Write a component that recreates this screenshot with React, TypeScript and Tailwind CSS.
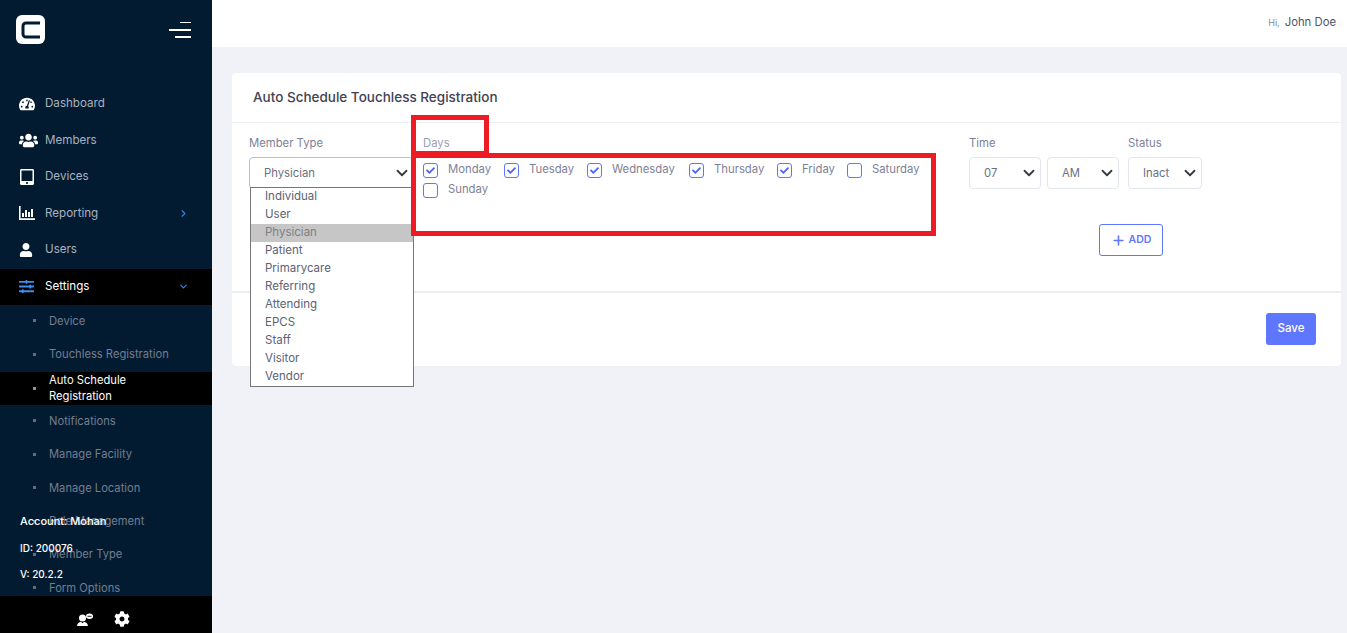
import { ChevronDown, ChevronRight, Plus } from 'lucide-react';
import { FaCheck, FaCog, FaSlidersH, FaTabletAlt, FaTachometerAlt, FaUser, FaUsers } from 'react-icons/fa';

const subItems = [
  'Device',
  'Touchless Registration',
  'Auto Schedule Registration',
  'Notifications',
  'Manage Facility',
  'Manage Location',
  'Role Management',
  'Member Type',
  'Form Options',
];

const memberTypes = ['Individual', 'User', 'Physician', 'Patient', 'Primarycare', 'Referring', 'Attending', 'EPCS', 'Staff', 'Visitor', 'Vendor'];

const days = [
  { name: 'Monday', on: true, cls: 'w-[81px]' },
  { name: 'Tuesday', on: true, cls: 'w-[83px]' },
  { name: 'Wednesday', on: true, cls: 'w-[102px]' },
  { name: 'Thursday', on: true, cls: 'w-[88px]' },
  { name: 'Friday', on: true, cls: 'w-[70px]' },
  { name: 'Saturday', on: false, cls: 'w-[82px]' },
  { name: 'Sunday', on: false, cls: 'w-[81px]' },
];

function Logo() {
  return (
    <svg width="29" height="29" viewBox="0 0 29 29">
      <rect width="29" height="29" rx="6" fill="#fff" />
      <path d="M24 8H10a3 3 0 0 0-3 3v8a3 3 0 0 0 3 3h14" fill="none" stroke="#031b30" strokeWidth="3" />
    </svg>
  );
}

function ReportIcon() {
  return (
    <svg width="16" height="14" viewBox="0 0 16 14" fill="#fff">
      <path d="M0 0h1.600v12.200H16V14H0z" />
      <path d="M3 7h2v4H3zM6 4h2v7H6zM9 6h2v5H9zM12 3h2v8h-2z" />
    </svg>
  );
}

function SupportIcon() {
  return (
    <svg width="16" height="13" viewBox="0 0 16 13" fill="#fff">
      <circle cx="5.500" cy="5" r="3.500" />
      <path d="M0 13c.2-2.500 2-4 4-4.200l1.500 1.500L7 8.800c2 .2 3.800 1.700 4 4.200z" />
      <ellipse cx="12.500" cy="3.200" rx="3.500" ry="2.700" />
      <path d="M10.500 2.800h4v.9h-4z" fill="#000" />
    </svg>
  );
}

function SelectBox({ value, cls }: { value: string; cls: string }) {
  return (
    <div className={`h-[32px] rounded-[4px] border flex items-center justify-between text-[11.300px] text-[#6b7080] ${cls}`}>
      <span>{value}</span>
      <svg width="16" height="12" viewBox="0 0 16 16" fill="none" stroke="#343a40" strokeWidth="2.400" strokeLinecap="round" strokeLinejoin="round">
        <path d="m2 5 6 6 6-6" />
      </svg>
    </div>
  );
}

function NavItem({ icon, label, right, active }: { icon: React.ReactNode; label: string; right?: React.ReactNode; active?: boolean }) {
  return (
    <div className={`h-[36.500px] shrink-0 pl-[19px] pr-[23px] pb-[1px] flex items-center ${active ? 'bg-black text-white' : 'text-[#a9b2c0]'}`}>
      <div className="w-[26px] flex justify-start">{icon}</div>
      <span className="text-[11.600px] flex-1">{label}</span>
      {right}
    </div>
  );
}

export default function App() {
  return (
    <div className="relative h-[633px] w-[1347px] overflow-hidden flex bg-[#f1f2f8] [font-family:Inter,sans-serif]">
      {/* Sidebar */}
      <aside className="relative w-[212px] h-full bg-[#031b30] flex flex-col overflow-hidden shrink-0">
        <div className="h-[86px] pl-[16px] pr-[21px] pt-[15px] flex justify-between items-start shrink-0">
          <Logo />
          <div className="flex flex-col items-end pt-[7px]">
            <div className="w-[11px] h-[1px] bg-white" />
            <div className="w-[22px] h-[2px] bg-white mt-[6px]" />
            <div className="w-[16px] h-[2px] bg-white mt-[5px]" />
          </div>
        </div>

        <NavItem icon={<FaTachometerAlt size={16} color="#fff" />} label="Dashboard" />
        <NavItem icon={<FaUsers size={19} color="#fff" />} label="Members" />
        <NavItem icon={<FaTabletAlt size={16} color="#fff" />} label="Devices" />
        <NavItem icon={<ReportIcon />} label="Reporting" right={<ChevronRight size={11} strokeWidth={2.5} color="#2f86e6" />} />
        <NavItem icon={<FaUser size={14} color="#fff" />} label="Users" />
        <NavItem
          icon={<FaSlidersH size={15} color="#3b8fee" />}
          label="Settings"
          active
          right={<ChevronDown size={11} strokeWidth={2.5} color="#2f86e6" />}
        />

        {subItems.map((s, i) => (
          <div
            key={s}
            className={`h-[33.400px] shrink-0 pl-[33px] pr-[20px] flex items-center text-[11.200px] leading-[16px] ${i === 2 ? 'bg-black text-white' : 'pb-[2px] text-[#727e91]'}`}
          >
            <span className={`w-[3px] h-[3px] mr-[13px] shrink-0 ${i === 2 ? 'bg-[#8b95a5]' : 'bg-[#5f6d80]'}`} />
            <span className={i === 2 ? 'w-[100px]' : ''}>{s}</span>
          </div>
        ))}

        {/* account info sits over the menu */}
        <div className="absolute left-[20px] top-[514px] text-white font-medium leading-[14px] flex flex-col gap-[12.500px]">
          <div className="text-[11px]">Account: Mohan</div>
          <div className="text-[10px]">ID: 200076</div>
          <div className="text-[10px]">V: 20.2.2</div>
        </div>
        <div className="absolute left-0 right-0 bottom-0 h-[37px] bg-black flex items-center justify-center gap-[21px] pt-[9px] pr-[6px]">
          <SupportIcon />
          <FaCog size={16} color="#fff" />
        </div>
      </aside>

      {/* Main */}
      <main className="flex-1 flex flex-col">
        <header className="h-[47px] bg-white flex items-center justify-end pr-[11px] pb-[2px] text-[11.300px] text-[#4f5566]">
          <span className="text-[9px] text-[#7f8aa8] mr-[5px]">Hi,</span>
          <span>John Doe</span>
        </header>

        <div className="pt-[26px] pl-[20px] pr-[6px]">
          <section className="bg-white rounded-[4px] h-[293px] flex flex-col">
            <div className="h-[50px] border-b border-[#eceef3] flex items-center pl-[21px]">
              <h1 className="text-[13.500px] font-medium text-[#3f4254]">Auto Schedule Touchless Registration</h1>
            </div>

            <div className="h-[170px] pt-[13px] pl-[17px] flex border-b-2 border-[#eceef3]">
              <div className="w-[164px] mr-[10px]">
                <div className="text-[11.300px] leading-[14px] text-[#7d8197] mb-[7px]">Member Type</div>
                <SelectBox value="Physician" cls="w-[164px] pl-[14px] pr-[2px] border-[#b3bdf5]" />
              </div>

              <div className="w-[546px]">
                <div className="text-[11.300px] leading-[14px] text-[#9a9eb0] mb-[13px]">Days</div>
                <div className="flex flex-wrap w-[510px]">
                  {days.map(d => (
                    <div key={d.name} className={`h-[20px] flex items-start ${d.cls}`}>
                      <div className="w-[15px] h-[15px] rounded-[3px] border-[1.500px] border-[#5f76ff] flex items-center justify-center shrink-0">
                        {d.on && <FaCheck size={9} color="#4a64f5" />}
                      </div>
                      <span className="ml-[10px] text-[11.300px] leading-[13px] text-[#7d8197]">{d.name}</span>
                    </div>
                  ))}
                </div>
              </div>

              <div className="flex flex-col">
                <div className="flex">
                  <div className="mr-[6px]">
                    <div className="text-[11.300px] leading-[14px] text-[#7d8197] mb-[7px]">Time</div>
                    <SelectBox value="07" cls="w-[72px] pl-[14px] pr-[3px] border-[#e4e6ef]" />
                  </div>
                  <div className="mr-[9px] pt-[21px]">
                    <SelectBox value="AM" cls="w-[72px] pl-[14px] pr-[3px] border-[#e4e6ef]" />
                  </div>
                  <div>
                    <div className="text-[11.300px] leading-[14px] text-[#7d8197] mb-[7px]">Status</div>
                    <SelectBox value="Inact" cls="w-[74px] pl-[14px] pr-[3px] border-[#e4e6ef]" />
                  </div>
                </div>
                <button className="mt-[35px] ml-[130px] w-[64px] h-[32px] rounded-[3px] border border-[#5f76ff] flex items-center justify-center gap-[3px] text-[10.500px] font-semibold text-[#5f76ff]">
                  <Plus size={15} strokeWidth={2.5} />
                  ADD
                </button>
              </div>
            </div>

            <div className="flex-1 flex justify-end items-start pt-[20px] pr-[25px]">
              <button className="w-[50px] h-[32px] rounded-[3px] bg-[#5f76ff] text-white text-[11.500px] font-medium">Save</button>
            </div>
          </section>
        </div>
      </main>

      {/* open member type list */}
      <ul className="absolute left-[250px] top-[187px] w-[164px] h-[200px] bg-white border border-[#767676] text-[11.500px] text-[#5d6274]">
        {memberTypes.map(m => (
          <li key={m} className={`h-[18px] leading-[17px] pl-[14px] ${m === 'Physician' ? 'bg-[#c6c6c6] text-[#7d7f85]' : ''}`}>{m}</li>
        ))}
      </ul>

      {/* red annotation boxes */}
      <div className="absolute left-[411px] top-[115px] w-[78px] h-[41px] border-[5px] border-[#ed1c24]" />
      <div className="absolute left-[411px] top-[153px] w-[525px] h-[83px] border-[5px] border-[#ed1c24]" />
    </div>
  );
}
